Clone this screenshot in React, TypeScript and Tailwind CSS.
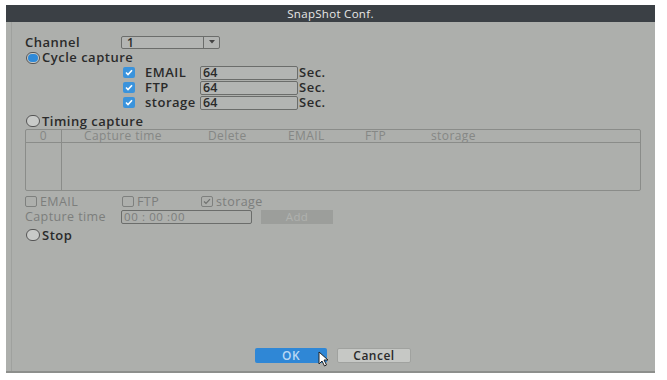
import React from "react";

const font = { fontFamily: '"Open Sans", "DejaVu Sans", sans-serif' };

function Radio({ on }: { on?: boolean }) {
  return (
    <span className="w-[14px] h-[12px] rounded-full border border-[#555] bg-[#c8cac8] flex items-center justify-center shrink-0">
      {on && <span className="w-[10px] h-[8px] rounded-full bg-[#2f8ad8]" />}
    </span>
  );
}

function BlueCheck() {
  return (
    <span className="w-[12px] h-[11px] bg-[#3a93dc] rounded-[2px] flex items-center justify-center shrink-0">
      <svg width="8" height="7" viewBox="0 0 8 7">
        <path d="M1 3.5 L3 5.5 L7 1.2" stroke="#fff" strokeWidth="1.6" fill="none" />
      </svg>
    </span>
  );
}

function GreyCheck({ on }: { on?: boolean }) {
  return (
    <span className="w-[12px] h-[11px] border border-[#7e807e] rounded-[2px] flex items-center justify-center shrink-0">
      {on && (
        <svg width="8" height="7" viewBox="0 0 8 7">
          <path d="M1 3.5 L3 5.5 L7 1.2" stroke="#6f716f" strokeWidth="1.2" fill="none" />
        </svg>
      )}
    </span>
  );
}

const dark = "text-[13px] leading-[15px] font-semibold text-[#2a2a2a] tracking-[0.5px]";

function CheckRow({ label }: { label: string }) {
  return (
    <div className="flex items-center h-[15px]">
      <div className="w-[22px] flex">
        <BlueCheck />
      </div>
      <span className={"w-[55px] " + dark}>{label}</span>
      <div className="w-[98px] h-[14px] border border-[#6b6d6b] rounded-[2px] bg-[#b3b5b3] text-[12.5px] leading-[12px] px-[2px] text-[#2a2a2a] font-semibold">64</div>
      <span className={"ml-[1px] " + dark}>Sec.</span>
    </div>
  );
}

export default function App() {
  return (
    <div className="w-[667px] h-[380px] bg-white pt-[5px] pl-[6px]" style={font}>
      <div className="w-[649px] h-[368px] bg-[#adafac] flex flex-col border-b-2 border-[#8d8f8c]">
        <div className="h-[17px] bg-[#3b4045] flex items-center justify-center text-[11.5px] text-[#e8e8e8] tracking-[0.3px]">SnapShot Conf.</div>
        <div className="flex-1 flex flex-col border-l border-[#9fa19e] ml-[5px] pl-[13px] pt-[12px] pr-[14px]">
          <div className="flex items-center h-[16px]">
            <span className={"w-[96px] " + dark}>Channel</span>
            <div className="w-[99px] h-[13px] border border-[#6b6d6b] rounded-[2px] flex bg-[#b3b5b3]">
              <span className="flex-1 text-[12px] leading-[11px] px-[5px] font-semibold text-[#2a2a2a]">1</span>
              <span className="w-[16px] border-l border-[#6b6d6b] flex items-center justify-center">
                <svg width="6" height="4" viewBox="0 0 6 4"><path d="M0 0 L6 0 L3 3.5 Z" fill="#444" /></svg>
              </span>
            </div>
          </div>
          <div className="flex items-center h-[15px] gap-[2px] ml-[1px]">
            <Radio on />
            <span className={dark}>Cycle capture</span>
          </div>
          <div className="flex flex-col pl-[98px]">
            <CheckRow label="EMAIL" />
            <CheckRow label="FTP" />
            <CheckRow label="storage" />
          </div>
          <div className="flex items-center h-[19px] pt-[3px] gap-[2px] ml-[1px]">
            <Radio />
            <span className={dark}>Timing capture</span>
          </div>
          <div className="w-[616px] h-[62px] border border-[#8a8c89] rounded-[2px] flex flex-col">
            <div className="h-[13px] border-b border-[#8a8c89] flex text-[12px] leading-[12px] text-[#858785] tracking-[0.4px]">
              <span className="w-[36px] border-r border-[#8a8c89] text-center">0</span>
              <span className="w-[146px] pl-[22px]">Capture time</span>
              <span className="w-[80px]">Delete</span>
              <span className="w-[77px]">EMAIL</span>
              <span className="w-[66px]">FTP</span>
              <span>storage</span>
            </div>
            <div className="flex-1 flex">
              <span className="w-[36px] border-r border-[#8a8c89]" />
            </div>
          </div>
          <div className="flex items-center h-[16px] mt-[2px] text-[12.5px] leading-[15px] text-[#7c7e7c] tracking-[0.4px]">
            <div className="flex items-center gap-[3px] w-[97px]"><GreyCheck /><span>EMAIL</span></div>
            <div className="flex items-center gap-[3px] w-[79px]"><GreyCheck /><span>FTP</span></div>
            <div className="flex items-center gap-[3px]"><GreyCheck on /><span>storage</span></div>
          </div>
          <div className="flex items-center h-[15px] text-[12.5px] leading-[15px] text-[#7c7e7c] tracking-[0.4px]">
            <span className="w-[96px]">Capture time</span>
            <div className="w-[131px] h-[14px] border border-[#6b6d6b] rounded-[2px] text-[11.5px] leading-[12px] px-[2px] text-[#7c7e7c] tracking-[0.6px]">00 : 00 :00</div>
            <div className="ml-[9px] w-[72px] h-[14px] bg-[#9c9e9b] text-center text-[11.5px] leading-[14px] text-[#b0b2af]">Add</div>
          </div>
          <div className="flex items-center h-[22px] gap-[2px] ml-[1px]">
            <Radio />
            <span className={dark}>Stop</span>
          </div>
          <div className="flex-1" />
          <div className="flex justify-center gap-[10px] pb-[8px] relative">
            <div className="w-[72px] h-[15px] bg-[#2f87d6] rounded-[2px] text-center text-[12px] leading-[15px] font-semibold text-[#b9d8f4] tracking-[0.5px]">OK</div>
            <div className="w-[74px] h-[15px] bg-[#c6c8c5] border border-[#a0a29f] rounded-[2px] text-center text-[12px] leading-[13px] font-semibold text-[#2a2a2a] tracking-[0.5px]">Cancel</div>
            <svg className="absolute left-[293px] top-[3px]" width="12" height="16" viewBox="0 0 12 16">
              <path d="M1 1 L1 13 L4 10 L6.5 15 L8.5 14 L6 9 L10 9 Z" fill="#fff" stroke="#222" strokeWidth="1" />
            </svg>
          </div>
        </div>
      </div>
    </div>
  );
}
